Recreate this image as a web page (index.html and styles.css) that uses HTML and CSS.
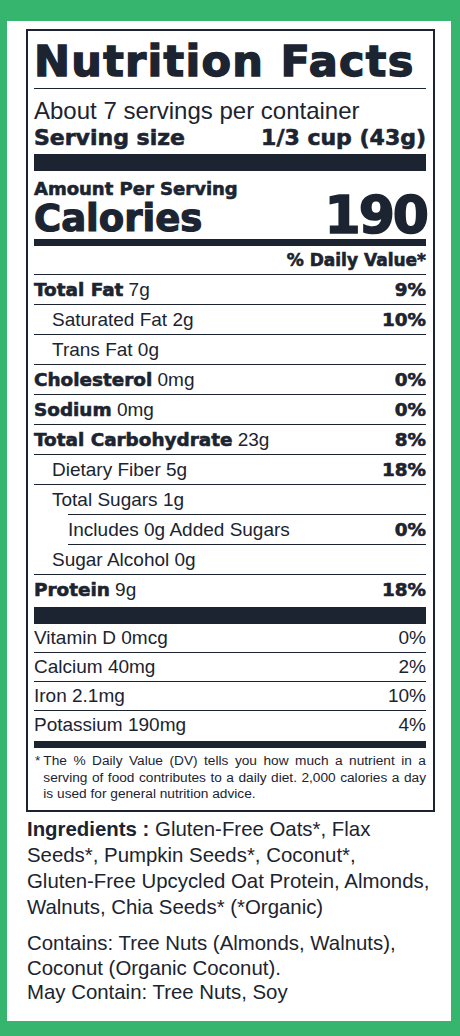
FILE: index.html
```html
<!DOCTYPE html>
<html lang="en">
  <head>
    <meta charset="UTF-8" />
    <meta name="viewport" content="width=device-width, initial-scale=1.0" />
    <title>Nutrition Facts</title>
    <link rel="stylesheet" href="styles.css">
  </head>
  <body>
    <div class="panel">
      <div class="label">
        <h1 class="title">Nutrition Facts</h1>
        <div class="serving">
          <p class="servings">About 7 servings per container</p>
          <div class="size"><span>Serving size</span><span>1/3 cup (43g)</span></div>
        </div>
        <div class="bar bar-thick"></div>
        <div class="calories">
          <div class="calories-left">
            <p class="amount">Amount Per Serving</p>
            <p class="calories-name">Calories</p>
          </div>
          <p class="calories-value">190</p>
        </div>
        <div class="bar bar-medium"></div>
        <div class="dv-head">% Daily Value*</div>

        <div class="row"><span><b>Total Fat</b> 7g</span><b>9%</b></div>
        <div class="row sub"><span>Saturated Fat 2g</span><b>10%</b></div>
        <div class="row sub"><span>Trans Fat 0g</span></div>
        <div class="row"><span><b>Cholesterol</b> 0mg</span><b>0%</b></div>
        <div class="row"><span><b>Sodium</b> 0mg</span><b>0%</b></div>
        <div class="row"><span><b>Total Carbohydrate</b> 23g</span><b>8%</b></div>
        <div class="row sub"><span>Dietary Fiber 5g</span><b>18%</b></div>
        <div class="row sub no-line"><span>Total Sugars 1g</span></div>
        <div class="row added"><span>Includes 0g Added Sugars</span><b>0%</b></div>
        <div class="row sub"><span>Sugar Alcohol 0g</span></div>
        <div class="row no-line"><span><b>Protein</b> 9g</span><b>18%</b></div>

        <div class="bar bar-thick"></div>
        <div class="row vit"><span>Vitamin D 0mcg</span><span>0%</span></div>
        <div class="row vit"><span>Calcium 40mg</span><span>2%</span></div>
        <div class="row vit"><span>Iron 2.1mg</span><span>10%</span></div>
        <div class="row vit no-line"><span>Potassium 190mg</span><span>4%</span></div>
        <div class="bar bar-medium bar-end"></div>

        <div class="footnote">
          <span class="star">*</span>
          <p>The % Daily Value (DV) tells you how much a nutrient in a serving of food contributes to a daily diet. 2,000 calories a day is used for general nutrition advice.</p>
        </div>
      </div>

      <p class="ingredients">
        <strong>Ingredients :</strong> Gluten-Free Oats*, Flax<br>
        Seeds*, Pumpkin Seeds*, Coconut*,<br>
        Gluten-Free Upcycled Oat Protein, Almonds,<br>
        Walnuts, Chia Seeds* (*Organic)
      </p>
      <p class="contains">
        Contains: Tree Nuts (Almonds, Walnuts),<br>
        Coconut (Organic Coconut).<br>
        May Contain: Tree Nuts, Soy
      </p>
    </div>
  </body>
</html>
```

FILE: styles.css
```css
* {
  padding: 0;
  margin: 0;
  border: 0;
}
*,
*:before,
*:after {
  box-sizing: border-box;
}
html,
body {
  width: 100%;
}
body {
  background-color: #35b56d;
  padding: 21px 9px 17px 7px;
  font-family: "Liberation Sans", Arial, sans-serif;
  color: #1b2430;
}
h1 {
  font-weight: 400;
}
/* -------------- */
.panel {
  background-color: #fff;
  padding: 8px 16px 16px 19px;
}

.label {
  border: 2px solid #1b2430;
  padding: 0 7px 0 6px;
}

/* heavy face: DejaVu bold thickened with a stroke */
.label b,
.title,
.size,
.amount,
.calories-name,
.calories-value,
.dv-head {
  font-family: "DejaVu Sans", sans-serif;
  font-weight: 700;
  -webkit-text-stroke: 0.6px #1b2430;
}

.title {
  font-size: 43px;
  line-height: 48px;
  letter-spacing: 1.3px;
  padding: 6px 0 3px;
  border-bottom: 1px solid #1b2430;
  -webkit-text-stroke-width: 1.4px;
}

.serving {
  padding-top: 9px;
}

.servings {
  font-size: 24px;
  line-height: 26px;
}

.size {
  display: flex;
  justify-content: space-between;
  font-size: 22px;
  line-height: 26px;
  margin-top: 1px;
}

.bar {
  background-color: #1b2430;
}

.bar-thick {
  height: 17px;
  margin-top: 3px;
}

.bar-medium {
  height: 7px;
}

.bar-end {
  margin-top: 2px;
}

.calories {
  display: flex;
  justify-content: space-between;
  align-items: flex-end;
  padding-top: 8px;
}

.amount {
  font-size: 18px;
  line-height: 20px;
}

.calories-name {
  font-size: 37px;
  line-height: 40px;
  -webkit-text-stroke-width: 1.2px;
}

.calories-value {
  font-size: 52px;
  line-height: 48px;
  letter-spacing: -2px;
  margin-right: -1px;
  -webkit-text-stroke-width: 1.6px;
}

.dv-head {
  text-align: right;
  font-size: 17px;
  line-height: 28px;
  border-bottom: 1px solid #1b2430;
}

.row {
  display: flex;
  justify-content: space-between;
  align-items: baseline;
  font-size: 19px;
  line-height: 29px;
  border-bottom: 1px solid #1b2430;
}

.row b {
  font-size: 18.4px;
}

.row.sub {
  padding-left: 18px;
}

.row.no-line {
  border-bottom: 0;
}

.row.added {
  margin-left: 34px;
  border-top: 1px solid #1b2430;
}

.row.vit {
  line-height: 28px;
}

.footnote {
  display: flex;
  gap: 3px;
  font-size: 13.7px;
  line-height: 16.7px;
  padding: 5px 0 7px 1px;
}

.footnote p {
  text-align: justify;
}

.ingredients,
.contains {
  font-size: 20.4px;
  padding-left: 1px;
}

.ingredients {
  line-height: 26px;
  margin-top: 4px;
}

.ingredients strong {
  font-weight: 700;
}

.contains {
  line-height: 24.5px;
  margin-top: 11px;
}
```
